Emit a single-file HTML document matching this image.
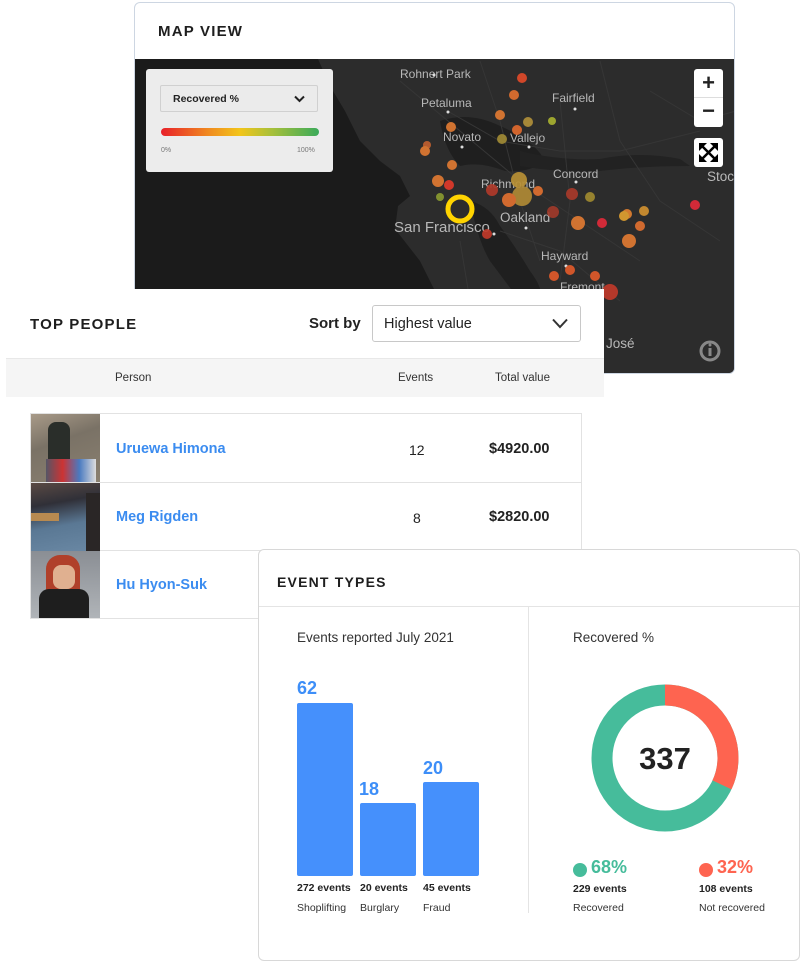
<!DOCTYPE html>
<html><head><meta charset="utf-8"><style>
*{box-sizing:border-box;margin:0;padding:0}
body{width:802px;height:962px;background:#fff;position:relative;overflow:hidden;font-family:"Liberation Sans",sans-serif;color:#222}
.abs{position:absolute}
.h{font-weight:700;letter-spacing:1.2px;font-size:15px;color:#1e1e1e}
</style></head><body>

<!-- MAP PANEL -->
<div class="abs" style="left:134px;top:2px;width:601px;height:372px;border:1px solid #cdd6e2;border-radius:6px;background:#fff;overflow:hidden">
  <div class="abs h" style="left:23px;top:20px">MAP VIEW</div>
  <svg class="abs" style="left:0;top:56px" width="601" height="316" viewBox="135 58 601 316">
    <rect x="135" y="58" width="601" height="316" fill="#1b1b1b"/>
    <path d="M318 58 L736 58 L736 374 L455 374 L440 300 L420 260 L395 228 L398 205 L410 195 L400 175 L380 160 L360 140 L345 110 L330 85 Z" fill="#2c2c2c"/>
    <path d="M440 120 Q470 110 500 125 Q535 140 545 160 Q530 172 505 170 Q480 160 460 165 Q445 150 440 120 Z" fill="#1f1f1f"/>
    <path d="M470 200 Q490 205 500 225 Q515 245 530 270 Q545 290 540 300 L520 300 Q505 280 490 260 Q478 240 470 200 Z" fill="#1f1f1f"/>
    <path d="M520 150 Q560 160 600 158 Q640 150 680 158 L690 165 Q640 165 600 170 Q560 172 520 165 Z" fill="#222"/>
    <g stroke="#363636" stroke-width="1" fill="none">
      <path d="M400 80 L460 130 L520 180 L580 220 L640 260"/><path d="M430 100 L500 140 L560 150 L620 150 L700 130"/>
      <path d="M560 100 L570 200 L560 280"/><path d="M480 60 L500 120 L520 200 L540 260"/>
      <path d="M600 60 L620 140 L660 200 L720 240"/><path d="M650 90 L700 120 L736 110"/>
      <path d="M460 240 L470 300 L480 360"/><path d="M500 230 L560 250 L620 300"/>
    </g>
    <g font-family="Liberation Sans,sans-serif" font-size="12" fill="#b8b8b8">
      <text x="400" y="77">Rohnert Park</text><text x="421" y="106">Petaluma</text>
      <text x="443" y="140">Novato</text><text x="510" y="141">Vallejo</text>
      <text x="552" y="101">Fairfield</text><text x="481" y="187">Richmond</text>
      <text x="553" y="177">Concord</text><text x="500" y="221" font-size="13.5">Oakland</text>
      <text x="394" y="231" font-size="15">San Francisco</text><text x="541" y="259">Hayward</text>
      <text x="560" y="290">Fremont</text><text x="707" y="180" font-size="13.5">Stoc</text>
      <text x="606" y="347" font-size="13.5">José</text>
    </g>
    <g fill="#ddd"><circle cx="434" cy="74" r="1.5"/><circle cx="448" cy="111" r="1.5"/><circle cx="462" cy="146" r="1.5"/><circle cx="529" cy="146" r="1.5"/><circle cx="575" cy="108" r="1.5"/><circle cx="576" cy="181" r="1.5"/><circle cx="526" cy="227" r="1.5"/><circle cx="494" cy="233" r="1.5"/><circle cx="566" cy="265" r="1.5"/></g>
    <g opacity="0.92">
      <circle cx="522" cy="77" r="5" fill="#e04a2a"/><circle cx="514" cy="94" r="5" fill="#e0702f"/>
      <circle cx="500" cy="114" r="5" fill="#e07a32"/><circle cx="528" cy="121" r="5" fill="#b0903a"/>
      <circle cx="552" cy="120" r="4" fill="#a8b030"/><circle cx="517" cy="129" r="5" fill="#e06a2e"/>
      <circle cx="502" cy="138" r="5" fill="#a08a35"/><circle cx="451" cy="126" r="5" fill="#e07a32"/>
      <circle cx="427" cy="144" r="4" fill="#c06030"/><circle cx="425" cy="150" r="5" fill="#e07a32"/>
      <circle cx="452" cy="164" r="5" fill="#e07a32"/><circle cx="438" cy="180" r="6" fill="#e07a32"/>
      <circle cx="449" cy="184" r="5" fill="#e03a2a"/><circle cx="440" cy="196" r="4" fill="#8a9a30"/>
      <circle cx="519" cy="179" r="8" fill="#b89035"/><circle cx="522" cy="195" r="10" fill="#b08a35"/>
      <circle cx="509" cy="199" r="7" fill="#e07030"/><circle cx="492" cy="189" r="6" fill="#b03a2a"/>
      <circle cx="538" cy="190" r="5" fill="#e07030"/><circle cx="487" cy="233" r="5" fill="#c03a2a"/>
      <circle cx="572" cy="193" r="6" fill="#a83a2a"/><circle cx="590" cy="196" r="5" fill="#a08a30"/>
      <circle cx="553" cy="211" r="6" fill="#a03a2a"/><circle cx="578" cy="222" r="7" fill="#e07a32"/>
      <circle cx="602" cy="222" r="5" fill="#e02a3a"/><circle cx="627" cy="213" r="5" fill="#e08030"/>
      <circle cx="624" cy="215" r="5" fill="#e0a030"/><circle cx="644" cy="210" r="5" fill="#d09030"/>
      <circle cx="640" cy="225" r="5" fill="#e07030"/><circle cx="629" cy="240" r="7" fill="#e07a32"/>
      <circle cx="695" cy="204" r="5" fill="#e02a3a"/><circle cx="554" cy="275" r="5" fill="#e05a2a"/>
      <circle cx="570" cy="269" r="5" fill="#e05a2a"/><circle cx="595" cy="275" r="5" fill="#e05a2a"/>
      <circle cx="610" cy="291" r="8" fill="#c03a2a"/>
    </g>
    <circle cx="460" cy="208" r="12" fill="none" stroke="#ffd400" stroke-width="5"/>
    <circle cx="710" cy="350" r="9" fill="none" stroke="#888" stroke-width="3"/>
    <rect x="708.5" y="347" width="3" height="8" fill="#888"/><circle cx="710" cy="344" r="1.5" fill="#888"/>
  </svg>
  <div class="abs" style="left:11px;top:66px;width:187px;height:103px;background:#ececec;border-radius:3px">
    <div class="abs" style="left:14px;top:16px;width:158px;height:27px;border:1px solid #d0d0d0;border-radius:2px;background:#ebebeb;font-size:10.5px;font-weight:700;padding:7px 12px;color:#222">Recovered %
      <svg class="abs" style="right:12px;top:9px" width="11" height="8"><path d="M1 1.5 L5.5 6 L10 1.5" stroke="#222" stroke-width="2" fill="none"/></svg></div>
    <div class="abs" style="left:15px;top:59px;width:158px;height:8px;border-radius:4px;background:linear-gradient(90deg,#e8202a,#f08a20 30%,#f2c51a 50%,#a8c03a 70%,#3aaa5a)"></div>
    <div class="abs" style="left:15px;top:78px;font-size:7px;color:#777">0%</div>
    <div class="abs" style="left:151px;top:78px;font-size:7px;color:#777">100%</div>
  </div>
  <div class="abs" style="left:559px;top:66px;width:29px;height:58px;background:#fff;border-radius:3px">
    <div style="height:29px;border-bottom:1px solid #ddd;text-align:center;font-size:22px;font-weight:700;line-height:28px">+</div>
    <div style="height:28px;text-align:center;font-size:22px;font-weight:700;line-height:26px">−</div>
  </div>
  <div class="abs" style="left:559px;top:135px;width:29px;height:29px;background:#fff;border-radius:3px">
    <svg width="29" height="29" viewBox="0 0 29 29"><g stroke="#000" stroke-width="2.5" fill="#000"><path d="M7 7 L22 22 M22 7 L7 22"/></g>
    <g fill="#000"><path d="M5 5 h8 l-8 8z"/><path d="M24 5 h-8 l8 8z"/><path d="M5 24 h8 l-8 -8z"/><path d="M24 24 h-8 l8 -8z"/></g></svg>
  </div>
</div>

<!-- TOP PEOPLE -->
<div class="abs" style="left:6px;top:289px;width:598px;height:108px;background:#fff"></div>
<div class="abs h" style="left:30px;top:316px">TOP PEOPLE</div>
<div class="abs" style="left:309px;top:315px;font-size:15px;font-weight:700;color:#222">Sort by</div>
<div class="abs" style="left:372px;top:305px;width:209px;height:37px;border:1px solid #c8c8c8;border-radius:3px;font-size:14.5px;padding:10px 11px;color:#222">Highest value
  <svg class="abs" style="right:12px;top:12px" width="16" height="11"><path d="M1 1.5 L8 9 L15 1.5" stroke="#333" stroke-width="2" fill="none"/></svg></div>
<div class="abs" style="left:6px;top:358px;width:598px;height:39px;background:#f5f5f5;border-top:1px solid #e8e8e8;font-size:11.5px;color:#333">
  <span class="abs" style="left:109px;top:13px">Person</span>
  <span class="abs" style="left:392px;top:13px">Events</span>
  <span class="abs" style="left:489px;top:13px">Total value</span>
</div>
<div class="abs" style="left:30px;top:413px;width:552px;height:206px;border:1px solid #e2e2e2">
  <div style="height:69px;border-bottom:1px solid #e2e2e2;position:relative">
    <div class="abs" style="left:0;top:0;width:69px;height:68px;background:linear-gradient(160deg,#a89a88,#7a7266 40%,#8a8070)"></div>
    <div class="abs" style="left:17px;top:8px;width:22px;height:40px;background:#2a2e2a;border-radius:8px 8px 2px 2px"></div>
    <div class="abs" style="left:15px;top:45px;width:50px;height:23px;background:linear-gradient(90deg,#556,#c33,#4a7ac0,#ddd)"></div>
    <span class="abs" style="left:85px;top:27px;font-size:14.5px;font-weight:700;color:#3b8cf0">Uruewa Himona</span>
    <span class="abs" style="left:378px;top:28px;font-size:14px">12</span>
    <span class="abs" style="left:458px;top:27px;font-size:14.5px;font-weight:700">$4920.00</span>
  </div>
  <div style="height:68px;border-bottom:1px solid #e2e2e2;position:relative">
    <div class="abs" style="left:0;top:0;width:69px;height:68px;background:linear-gradient(170deg,#5a4a44,#303038 30%,#5a7894 60%,#6a88a4)"></div>
    <div class="abs" style="left:0;top:30px;width:28px;height:8px;background:#b88a50"></div>
    <div class="abs" style="left:55px;top:10px;width:14px;height:58px;background:#2a2626"></div>
    <span class="abs" style="left:85px;top:26px;font-size:14.5px;font-weight:700;color:#3b8cf0">Meg Rigden</span>
    <span class="abs" style="left:382px;top:27px;font-size:14px">8</span>
    <span class="abs" style="left:458px;top:26px;font-size:14.5px;font-weight:700">$2820.00</span>
  </div>
  <div style="height:67px;position:relative">
    <div class="abs" style="left:0;top:0;width:69px;height:67px;background:linear-gradient(180deg,#8a8e94,#b0b4b8)"></div>
    <div class="abs" style="left:15px;top:4px;width:34px;height:38px;background:#b0402a;border-radius:14px 14px 4px 4px"></div>
    <div class="abs" style="left:22px;top:14px;width:22px;height:24px;background:#e0b090;border-radius:8px"></div>
    <div class="abs" style="left:8px;top:38px;width:50px;height:29px;background:#1e1e1e;border-radius:10px 10px 0 0"></div>
    <span class="abs" style="left:85px;top:26px;font-size:14.5px;font-weight:700;color:#3b8cf0">Hu Hyon-Suk</span>
  </div>
</div>

<!-- EVENT TYPES -->
<div class="abs" style="left:258px;top:549px;width:542px;height:412px;border:1px solid #d8d8d8;border-radius:6px;background:#fff">
  <div class="abs h" style="left:18px;top:24px;font-size:14px">EVENT TYPES</div>
  <div class="abs" style="left:0;top:56px;width:540px;height:1px;background:#e4e4e4"></div>
  <div class="abs" style="left:269px;top:57px;width:1px;height:306px;background:#e4e4e4"></div>
  <div class="abs" style="left:38px;top:80px;font-size:13.5px;color:#333">Events reported July 2021</div>
  <div class="abs" style="left:314px;top:80px;font-size:13.5px;color:#333">Recovered %</div>
  <div class="abs" style="left:38px;top:128px;font-size:18px;font-weight:700;color:#3d8ef8">62</div>
  <div class="abs" style="left:38px;top:153px;width:56px;height:173px;background:#4590fc;border-radius:2px"></div>
  <div class="abs" style="left:100px;top:229px;font-size:18px;font-weight:700;color:#3d8ef8">18</div>
  <div class="abs" style="left:101px;top:253px;width:56px;height:73px;background:#4590fc;border-radius:2px"></div>
  <div class="abs" style="left:164px;top:208px;font-size:18px;font-weight:700;color:#3d8ef8">20</div>
  <div class="abs" style="left:164px;top:232px;width:56px;height:94px;background:#4590fc;border-radius:2px"></div>
  <div class="abs" style="font-size:10.5px;font-weight:700;left:38px;top:332px">272 events</div>
  <div class="abs" style="font-size:10.5px;font-weight:700;left:101px;top:332px">20 events</div>
  <div class="abs" style="font-size:10.5px;font-weight:700;left:164px;top:332px">45 events</div>
  <div class="abs" style="font-size:10.5px;color:#333;left:38px;top:352px">Shoplifting</div>
  <div class="abs" style="font-size:10.5px;color:#333;left:101px;top:352px">Burglary</div>
  <div class="abs" style="font-size:10.5px;color:#333;left:164px;top:352px">Fraud</div>
  <svg class="abs" style="left:331px;top:133px" width="150" height="150" viewBox="0 0 150 150">
    <circle cx="75" cy="75" r="63" fill="none" stroke="#46bc9b" stroke-width="21"/>
    <circle cx="75" cy="75" r="63" fill="none" stroke="#fe6450" stroke-width="21" stroke-dasharray="126.7 400" transform="rotate(-90 75 75)"/>
    <text x="75" y="86" text-anchor="middle" font-family="Liberation Sans,sans-serif" font-size="31" font-weight="700" fill="#222">337</text>
  </svg>
  <div class="abs" style="left:314px;top:313px;width:14px;height:14px;border-radius:50%;background:#46bc9b"></div>
  <div class="abs" style="left:332px;top:307px;font-size:18px;font-weight:700;color:#46bc9b">68%</div>
  <div class="abs" style="left:440px;top:313px;width:14px;height:14px;border-radius:50%;background:#fe6450"></div>
  <div class="abs" style="left:458px;top:307px;font-size:18px;font-weight:700;color:#fe6450">32%</div>
  <div class="abs" style="font-size:10.5px;font-weight:700;left:314px;top:333px">229 events</div>
  <div class="abs" style="font-size:10.5px;font-weight:700;left:440px;top:333px">108 events</div>
  <div class="abs" style="font-size:10.5px;color:#333;left:314px;top:352px">Recovered</div>
  <div class="abs" style="font-size:10.5px;color:#333;left:440px;top:352px">Not recovered</div>
</div>
</body></html>
